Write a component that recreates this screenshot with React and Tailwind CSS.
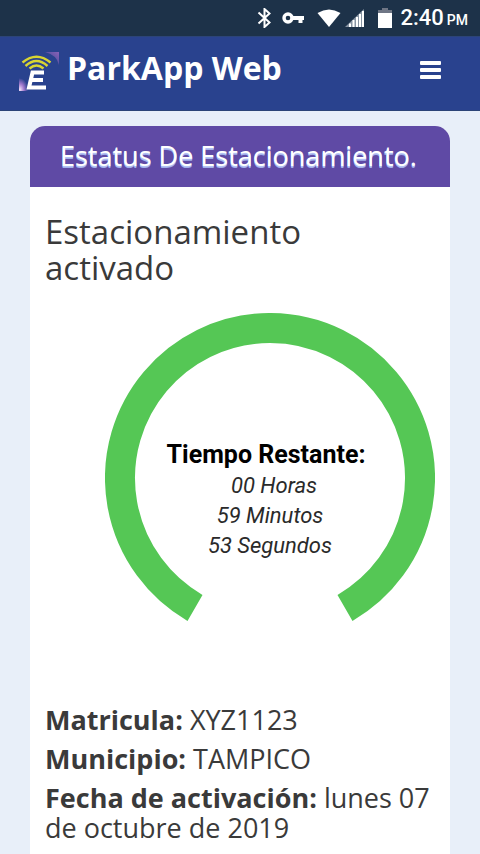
import React from "react";

const details = [
  { label: "Matricula:", value: "XYZ1123" },
  { label: "Municipio:", value: "TAMPICO" },
  { label: "Fecha de activación:", value: "lunes 07 de octubre de 2019" },
];

const StatusBar = () => {
  return (
    <div className="h-9 flex items-center justify-end pr-3 bg-[#1d3249] text-white font-['Roboto',sans-serif]">
      <svg className="w-4 h-5 mr-2" viewBox="0 0 16 20" fill="none" stroke="#fff" strokeWidth="2">
        <path d="M1.5 4.5 L12.5 14.5 L7.5 19 V1 L12.5 5.5 L1.5 15.5" />
      </svg>
      <svg className="w-6 h-5 mr-3" viewBox="0 0 24 20" fill="none" stroke="#fff">
        <circle cx="7" cy="10" r="4" strokeWidth="3.4" />
        <path d="M11 10 H23" strokeWidth="4" />
        <path d="M19.5 10 V15" strokeWidth="4" />
      </svg>
      <svg className="w-6 h-5 mr-1" viewBox="0 0 24 20" fill="#fff">
        <path d="M0.5 5 Q12 -2 23.5 5 L12 19 Z" />
      </svg>
      <svg className="w-5 h-5 mr-3" viewBox="0 0 20 20">
        <path d="M0 19 L19 1 V19 Z" fill="#8794a3" />
        <path
          d="M4 15.5 h2 v3.5 h-2z M7.5 12 h2 v7 h-2z M11 9 h2 v10 h-2z M14 6 h2 v13 h-2z M17 3 h2 v16 h-2z"
          fill="#fff"
        />
      </svg>
      <svg className="w-4 h-5 mr-2" viewBox="0 0 16 20">
        <path d="M5 0 h6 v2 h4 v4 h-14 v-4 h4z" fill="#6f7685" />
        <path d="M1 5 h14 v15 h-14z" fill="#fff" />
      </svg>
      <span className="flex items-baseline gap-[3px] font-medium">
        <span className="text-[22px] leading-9">2:40</span>
        <span className="text-sm">PM</span>
      </span>
    </div>
  );
};

const Logo = () => {
  return (
    <svg className="w-10 h-10" viewBox="0 0 40 40" fill="none">
      <defs>
        <linearGradient id="corner" x1="1" y1="0" x2="0" y2="1">
          <stop offset="0" stopColor="#8a62b8" />
          <stop offset="1" stopColor="#29428e" />
        </linearGradient>
        <radialGradient id="base" cx="0.1" cy="0.9" r="0.9">
          <stop offset="0" stopColor="#f3e3fa" />
          <stop offset="0.5" stopColor="#a078cc" />
          <stop offset="1" stopColor="#29428e" />
        </radialGradient>
      </defs>
      <path d="M26 0 H40 V13 Q38 3 26 0Z" fill="url(#corner)" />
      <path d="M0 26 L9 29 V39 H0Z" fill="url(#base)" />
      <g stroke="#d8d532" strokeWidth="2.4">
        <path d="M3.5 10.5 Q17.5 -1 31.5 10.5" />
        <path d="M6.5 14 Q17.5 4 28.5 14" />
        <path d="M10.5 16.5 Q17.5 10.5 24.5 16.5" />
      </g>
      <path d="M25 20.5 H13.5 L10 35.5 H27 M12 28 H24" stroke="#fff" strokeWidth="4" />
    </svg>
  );
};

const Navbar = () => {
  return (
    <header className="h-[75px] pl-[19px] pr-[15px] flex items-center justify-between bg-[#29428e] border-y border-[#2c4478]">
      <a href="#" className="flex items-center gap-2 pb-1">
        <Logo />
        <span className="pb-2 text-[32px] leading-10 font-bold text-white">ParkApp Web</span>
      </a>
      <button type="button" aria-label="Menu" className="px-6 pt-4 pb-6">
        <svg className="w-[21px] h-[18px]" viewBox="0 0 21 18" fill="#fff">
          <rect y="0" width="21" height="4" rx="1" />
          <rect y="7" width="21" height="4" rx="1" />
          <rect y="14" width="21" height="4" rx="1" />
        </svg>
      </button>
    </header>
  );
};

const Countdown = () => {
  return (
    <div className="grid w-[330px] ml-auto">
      <svg className="col-start-1 row-start-1 w-full" viewBox="0 0 330 330" fill="none">
        <path d="M90 294.9 A150 150 0 1 1 240 294.9" stroke="#55c755" strokeWidth="30" />
      </svg>
      <div className="col-start-1 row-start-1 pt-[127px] text-center text-[22px] leading-[30px] text-[#2a2a2a] font-['Roboto',sans-serif]">
        <h3 className="pr-2 pb-px text-[25px] leading-[30px] font-bold text-black">Tiempo Restante:</h3>
        <p className="pl-2 italic">00 Horas</p>
        <p className="italic">59 Minutos</p>
        <p className="italic">53 Segundos</p>
      </div>
    </div>
  );
};

const App = () => {
  return (
    <div className="min-h-screen flex flex-col bg-[#e8eff9] font-['Open_Sans',sans-serif]">
      <StatusBar />
      <Navbar />
      <main className="grow mt-[15px] mx-[30px] bg-white text-[#3a3a3a] rounded-t-[15px]">
        <h1 className="px-[30px] pt-3 pb-[13px] rounded-t-[15px] bg-[#5f4aa5] text-[27px] leading-9 text-white [text-shadow:0_1px_0_#b4c2f5,0_2px_0_#a3b1ea]">
          Estatus De Estacionamiento.
        </h1>
        <section className="px-[15px] pt-[27px]">
          <h2 className="text-[33px] leading-9 max-w-[300px] mb-[27px]">Estacionamiento activado</h2>
          <Countdown />
          <div className="pt-[62px] flex flex-col gap-[9px]">
            {details.map((item) => (
              <p key={item.label} className="text-[27px] leading-[30px]">
                <strong className="font-bold">{item.label}</strong> {item.value}
              </p>
            ))}
          </div>
        </section>
      </main>
    </div>
  );
};

export default App;
